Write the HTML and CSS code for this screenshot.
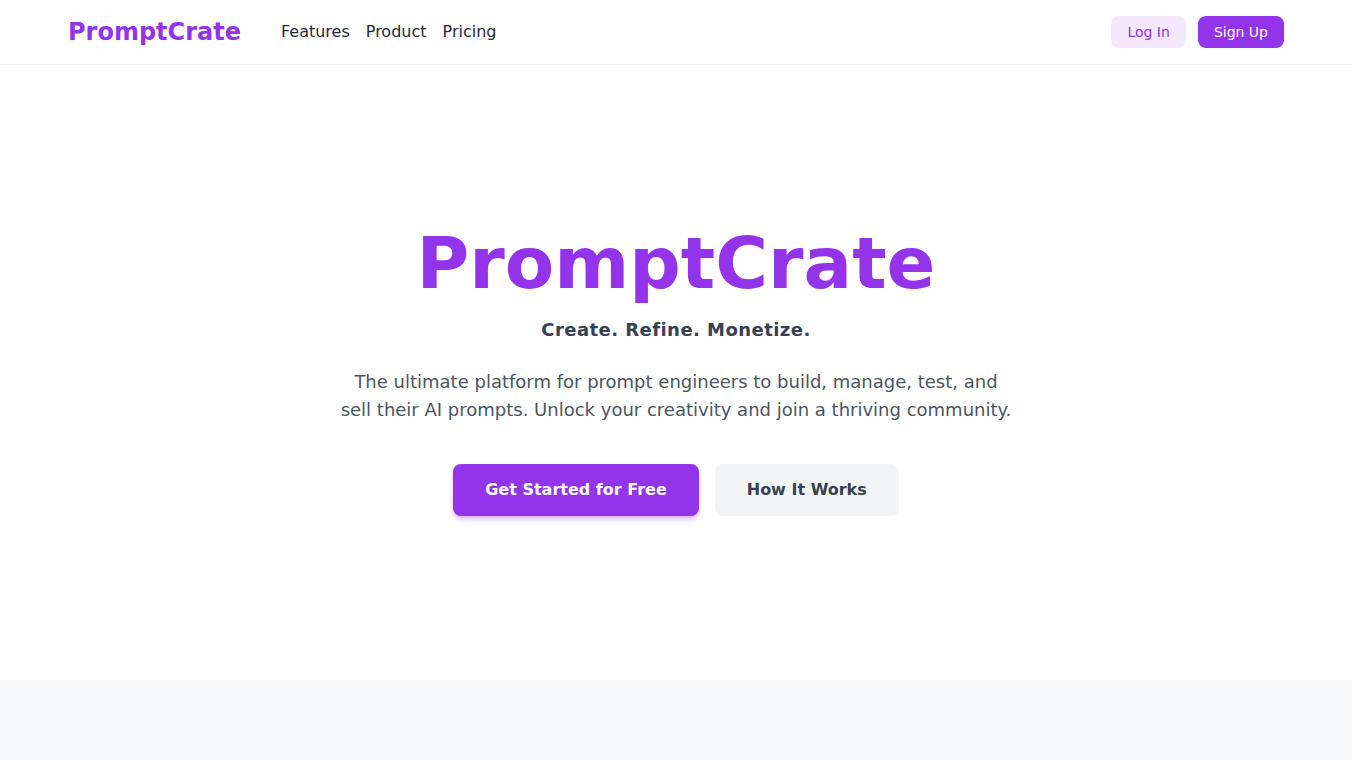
FILE: index.html
```html
<!DOCTYPE html>
<html lang="en">
<head>
<meta charset="utf-8">
<title>PromptCrate</title>
<link rel="stylesheet" href="styles.css">
</head>
<body>
<header class="site-header">
  <div class="container header-inner">
    <div class="header-left">
      <a class="logo" href="#">PromptCrate</a>
      <nav class="main-nav">
        <a href="#">Features</a>
        <a href="#">Product</a>
        <a href="#">Pricing</a>
      </nav>
    </div>
    <div class="header-right">
      <a class="btn-login" href="#">Log In</a>
      <a class="btn-signup" href="#">Sign Up</a>
    </div>
  </div>
</header>
<main>
  <section class="hero">
    <h1 class="hero-title">PromptCrate</h1>
    <p class="hero-tagline">Create. Refine. Monetize.</p>
    <p class="hero-text">The ultimate platform for prompt engineers to build, manage, test, and sell their AI prompts. Unlock your creativity and join a thriving community.</p>
    <div class="hero-actions">
      <a class="btn-primary" href="#">Get Started for Free</a>
      <a class="btn-secondary" href="#">How It Works</a>
    </div>
  </section>
  <section class="next-section"></section>
</main>
</body>
</html>
```
FILE: styles.css
```css
* { box-sizing: border-box; }
html, body { margin: 0; padding: 0; }
body {
  font-family: "DejaVu Sans", sans-serif;
  color: #1f2937;
  background: #ffffff;
}
a { text-decoration: none; color: inherit; }

.container {
  max-width: 1280px;
  margin: 0 auto;
  padding: 0 32px;
}
.site-header {
  border-bottom: 1px solid #f3f4f6;
  background: #fff;
}
.header-inner {
  height: 64px;
  display: flex;
  align-items: center;
  justify-content: space-between;
}
.header-left { display: flex; align-items: center; }
.logo {
  font-size: 24px;
  font-weight: 700;
  color: #9333ea;
  line-height: 32px;
}
.main-nav {
  margin-left: 40px;
  display: flex;
  gap: 16px;
  font-size: 16px;
  line-height: 24px;
  color: #1f2937;
}
.header-right { display: flex; align-items: center; gap: 12px; }
.btn-login, .btn-signup {
  font-size: 14px;
  line-height: 20px;
  padding: 6px 16px;
  border-radius: 8px;
}
.btn-login { background: #f3e8ff; color: #9333ea; }
.btn-signup { background: #9333ea; color: #fff; }

.hero {
  height: 615px;
  padding-top: 162px;
  display: flex;
  flex-direction: column;
  align-items: center;
  text-align: center;
}
.hero-title {
  margin: 0;
  font-size: 72px;
  line-height: 1;
  font-weight: 700;
  color: #9333ea;
}
.hero-tagline {
  margin: 17px 0 0;
  font-size: 18px;
  line-height: 28px;
  font-weight: 700;
  letter-spacing: 0.025em;
  color: #374151;
}
.hero-text {
  margin: 24px 0 0;
  max-width: 672px;
  font-size: 18px;
  line-height: 28px;
  color: #4b5563;
}
.hero-actions {
  margin-top: 40px;
  display: flex;
  gap: 16px;
}
.btn-primary, .btn-secondary {
  font-size: 16px;
  line-height: 24px;
  font-weight: 700;
  padding: 14px 32px;
  border-radius: 8px;
}
.btn-primary {
  background: #9333ea;
  color: #fff;
  box-shadow: 0 4px 6px -1px rgba(147, 51, 234, 0.3), 0 2px 4px -2px rgba(147, 51, 234, 0.3);
}
.btn-secondary {
  background: #f3f4f6;
  color: #374151;
}
.next-section {
  height: 200px;
  background: #f9fafb;
}
```
